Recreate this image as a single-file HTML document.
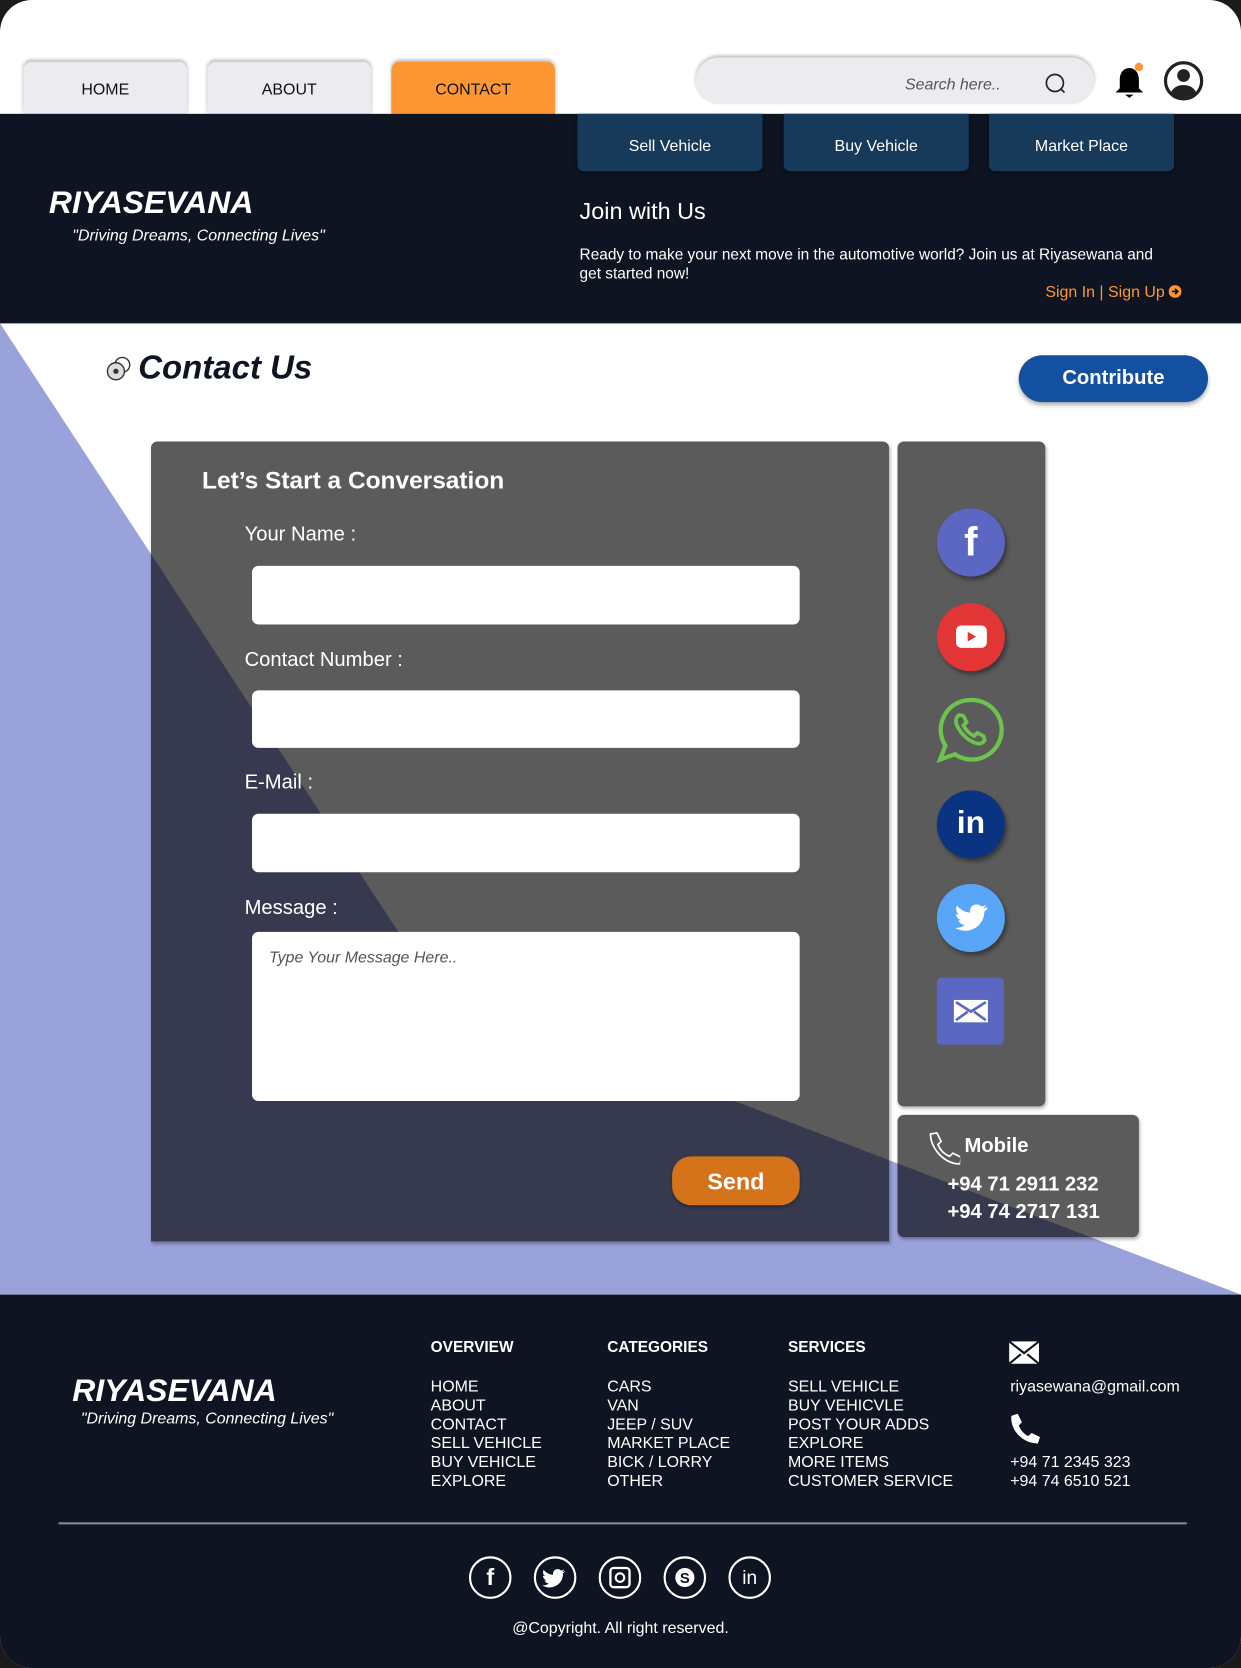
<!DOCTYPE html>
<html><head><meta charset="utf-8"><style>
*{margin:0;padding:0;box-sizing:border-box}
html,body{width:1241px;height:1668px;overflow:hidden;background:#1a1a1a}
body{font-family:"Liberation Sans",sans-serif}
#w{position:absolute;left:0;top:0;width:1167px;height:1568px;transform:scale(1.06341,1.06378);transform-origin:0 0;background:#fff;border-radius:30px;overflow:hidden}
.a{position:absolute}
.tab{position:absolute;top:58px;width:154px;height:49px;background:#ececf0;border-radius:8px 8px 0 0;box-shadow:0 -2px 3px rgba(0,0,0,.25);font-size:15px;text-align:center;line-height:54px;color:#111}
.nb{position:absolute;top:107px;width:174px;height:54px;background:#173a5b;border-radius:0 0 6px 6px;color:#fff;font-size:15px;text-align:center;line-height:62px;box-shadow:0 2px 4px rgba(0,0,0,.4)}
.lab{position:absolute;left:230px;color:#fff;font-size:19px}
.inp{position:absolute;left:237px;width:515px;background:#fff;border-radius:6px}
.fh{position:absolute;top:1259px;color:#fff;font-weight:bold;font-size:14.5px}
.fl{position:absolute;top:1295px;color:#fff;font-size:15px;line-height:17.8px}
.sc{position:absolute;width:64px;height:64px;border-radius:50%;left:881px;box-shadow:2px 3px 4px rgba(0,0,0,.4)}
.fc{position:absolute;top:1463px;width:40px;height:40px;border:2px solid #fff;border-radius:50%}
</style></head><body><div id="w">
<div class="tab" style="left:22px">HOME</div>
<div class="tab" style="left:195px">ABOUT</div>
<div class="tab" style="left:368px;background:#fd9734">CONTACT</div>
<div class="a" style="left:654px;top:54px;width:375px;height:44px;background:#ececf0;border-radius:22px;box-shadow:0 -2px 3px rgba(0,0,0,.25)"></div>
<div class="a" style="left:851px;top:71px;font-size:15px;font-style:italic;color:#555">Search here..</div>
<svg class="a" style="left:982px;top:68px" width="24" height="24"><circle cx="10" cy="10" r="8" fill="none" stroke="#222" stroke-width="1.6"/><line x1="16" y1="16" x2="19" y2="19" stroke="#222" stroke-width="1.6"/></svg>
<svg class="a" style="left:1045px;top:58px" width="34" height="38"><path d="M17 6c-6 0-9 5-9 11v8l-4 4h26l-4-4v-8c0-6-3-11-9-11z" fill="#000"/><path d="M13 31h8l-4 3z" fill="#000"/><circle cx="26" cy="5" r="4" fill="#fd9734"/></svg>
<svg class="a" style="left:1093px;top:56px" width="40" height="40"><circle cx="20" cy="20" r="17" fill="#fff" stroke="#222" stroke-width="3"/><circle cx="20" cy="15" r="6" fill="#222"/><path d="M8 31c3-6 8-7 12-7s9 1 12 7c-3 3-7 5-12 5s-9-2-12-5z" fill="#222"/></svg>
<div class="a" style="left:0;top:107px;width:1167px;height:197px;background:#0e1421"></div>
<div class="nb" style="left:543px">Sell Vehicle</div>
<div class="nb" style="left:737px">Buy Vehicle</div>
<div class="nb" style="left:930px">Market Place</div>
<div class="a" style="left:46px;top:174px;color:#fff;font-size:30px;font-weight:bold;font-style:italic">RIYASEVANA</div>
<div class="a" style="left:68px;top:213px;color:#fff;font-size:15px;font-style:italic">"Driving Dreams, Connecting Lives"</div>
<div class="a" style="left:545px;top:186px;color:#fff;font-size:22px">Join with Us</div>
<div class="a" style="left:545px;top:231px;color:#fff;font-size:14.5px;line-height:18px;width:560px">Ready to make your next move in the automotive world? Join us at Riyasewana and get started now!</div>
<div class="a" style="left:983px;top:266px;color:#fd9734;font-size:15px;white-space:nowrap">Sign In <span>|</span> Sign Up <svg width="12" height="12" style="vertical-align:-1px"><circle cx="6" cy="6" r="6" fill="#fd9734"/><path d="M3 6h5M6 3.5L8.5 6 6 8.5" stroke="#0e1421" stroke-width="1.6" fill="none"/></svg></div>
<svg class="a" style="left:0;top:304px" width="1167" height="913"><polygon points="0,0 408,623 1167,913 0,913" fill="#9aa2db"/></svg>
<svg class="a" style="left:98px;top:333px" width="28" height="28"><circle cx="17" cy="10" r="7" fill="#fff" stroke="#333" stroke-width="1.3"/><circle cx="11" cy="16" r="8" fill="#ddd" stroke="#333" stroke-width="1.3"/><circle cx="11" cy="16" r="2.5" fill="#333"/></svg>
<div class="a" style="left:130px;top:328px;font-size:31px;font-weight:bold;font-style:italic;color:#0e1421">Contact Us</div>
<div class="a" style="left:958px;top:334px;width:178px;height:44px;background:#1450a0;border-radius:22px;color:#fff;font-size:19px;font-weight:bold;text-align:center;line-height:44px;box-shadow:0 3px 4px rgba(0,0,0,.3)">Contribute</div>
<div class="a" style="left:142px;top:415px;width:694px;height:752px;background:rgba(0,0,0,.645);border-radius:6px 6px 0 0;box-shadow:1px 2px 3px rgba(0,0,0,.3)"></div>
<div class="a" style="left:190px;top:438px;color:#fff;font-size:23px;font-weight:bold">Let’s Start a Conversation</div>
<div class="lab" style="top:492px">Your Name :</div>
<div class="inp" style="top:532px;height:55px"></div>
<div class="lab" style="top:610px">Contact Number :</div>
<div class="inp" style="top:649px;height:54px"></div>
<div class="lab" style="top:725px">E-Mail :</div>
<div class="inp" style="top:765px;height:55px"></div>
<div class="lab" style="top:843px">Message :</div>
<div class="inp" style="top:876px;height:159px"><div style="margin:16px 0 0 16px;font-size:15px;font-style:italic;color:#555">Type Your Message Here..</div></div>
<div class="a" style="left:632px;top:1087px;width:120px;height:46px;background:#d4731a;border-radius:18px;color:#fff;font-size:22px;font-weight:bold;text-align:center;line-height:48px;box-shadow:0 2px 3px rgba(0,0,0,.3)">Send</div>
<div class="a" style="left:844px;top:415px;width:139px;height:625px;background:rgba(0,0,0,.645);border-radius:6px;box-shadow:1px 2px 3px rgba(0,0,0,.3)"></div>
<div class="sc" style="top:478px;background:#5b67c2;color:#fff;font-size:38px;font-weight:bold;text-align:center;line-height:64px">f</div>
<div class="sc" style="top:567px;background:#e23535"><svg width="64" height="64"><rect x="18" y="21" width="29" height="21" rx="5" fill="#fff"/><path d="M29 27l8 4.5-8 4.5z" fill="#e23535"/></svg></div>
<svg class="a" style="left:880px;top:654px" width="66" height="68"><path d="M33 4a28 28 0 1 1-15 51l-14 5 5-13A28 28 0 0 1 33 4z" fill="none" stroke="#6cc34e" stroke-width="4"/><path d="M22 18c-3 2-4 6-2 10 3 7 9 13 16 16 4 2 8 1 10-2l-1-4-6-3-3 3c-4-2-8-6-10-10l3-3-3-6z" fill="none" stroke="#6cc34e" stroke-width="3.5"/></svg>
<div class="sc" style="top:743px;background:#0a3482;color:#fff;font-size:30px;font-weight:bold;text-align:center;line-height:62px">in</div>
<div class="sc" style="top:831px;background:#59a6f9"><svg width="64" height="64"><path d="M47 22c-1 .6-2.4 1-3.6 1.1 1.3-.8 2.2-2 2.7-3.4-1.2.7-2.6 1.3-4 1.5a6.3 6.3 0 0 0-10.8 5.7C26.6 26.6 22 24.1 19 20.3c-1.7 2.9-.8 6.5 1.9 8.3-1 0-2-.3-2.8-.8 0 3 2.1 5.6 5 6.2-.9.3-1.9.3-2.8.1.8 2.5 3.2 4.3 5.9 4.4A12.7 12.7 0 0 1 17 41.1 18 18 0 0 0 44.700 25.900c1.200-.9 2.300-2 3.100-3.300z" fill="#fff"/></svg></div>
<div class="a" style="left:881px;top:919px;width:63px;height:63px;background:#5b67c2;border-radius:4px"><svg width="63" height="63"><rect x="16" y="21" width="32" height="21" fill="#fff"/><path d="M18 23l14 9 14-9M18 40l11-8M46 40l-11-8" stroke="#5b67c2" stroke-width="2.5" fill="none"/></svg></div>
<div class="a" style="left:844px;top:1048px;width:227px;height:115px;background:rgba(0,0,0,.645);border-radius:6px;box-shadow:1px 2px 3px rgba(0,0,0,.3)"></div>
<svg class="a" style="left:869px;top:1062px" width="34" height="34"><path d="M6 4l6-1 4 8-3 3c2 5 6 9 11 11l3-3 8 4-1 6c-14 1-28-14-28-28z" fill="none" stroke="#fff" stroke-width="1.6"/></svg>
<div class="a" style="left:907px;top:1067px;color:#fff;font-size:19px;font-weight:bold">Mobile</div>
<div class="a" style="left:891px;top:1101px;color:#fff;font-size:19px;line-height:26px;font-weight:bold">+94 71 2911 232<br>+94 74 2717 131</div>
<div class="a" style="left:0;top:1217px;width:1167px;height:351px;background:#0e1421"></div>
<div class="a" style="left:68px;top:1291px;color:#fff;font-size:30px;font-weight:bold;font-style:italic">RIYASEVANA</div>
<div class="a" style="left:76px;top:1325px;color:#fff;font-size:15px;font-style:italic">"Driving Dreams, Connecting Lives"</div>
<div class="fh" style="left:405px">OVERVIEW</div>
<div class="fh" style="left:571px">CATEGORIES</div>
<div class="fh" style="left:741px">SERVICES</div>
<div class="fl" style="left:405px">HOME<br>ABOUT<br>CONTACT<br>SELL VEHICLE<br>BUY VEHICLE<br>EXPLORE</div>
<div class="fl" style="left:571px">CARS<br>VAN<br>JEEP / SUV<br>MARKET PLACE<br>BICK / LORRY<br>OTHER</div>
<div class="fl" style="left:741px">SELL VEHICLE<br>BUY VEHICVLE<br>POST YOUR ADDS<br>EXPLORE<br>MORE ITEMS<br>CUSTOMER SERVICE</div>
<svg class="a" style="left:948px;top:1260px" width="30" height="23"><rect x="1" y="1" width="28" height="21" fill="#fff"/><path d="M1 1l14 11 14-11M1 22l11-9M29 22l-11-9" stroke="#0e1421" stroke-width="2" fill="none"/></svg>
<div class="a" style="left:950px;top:1295px;color:#fff;font-size:15px">riyasewana@gmail.com</div>
<svg class="a" style="left:948px;top:1328px" width="30" height="30"><path d="M3 3l6-2 4 8-3 3c2 5 5 8 9 10l3-3 8 4-2 6C14 29 2 17 3 3z" fill="#fff"/></svg>
<div class="fl" style="left:950px;top:1366px">+94 71 2345 323<br>+94 74 6510 521</div>
<div class="a" style="left:55px;top:1431px;width:1061px;height:2px;background:#858890"></div>
<div class="fc" style="left:441px;color:#fff;font-size:22px;text-align:center;line-height:36px;font-weight:bold">f</div>
<div class="fc" style="left:502px"><svg width="36" height="36"><path d="M27 12c-.8.4-1.6.6-2.5.7.9-.5 1.6-1.4 1.900-2.400-.9.5-1.800.900-2.800 1.100a4.400 4.400 0 0 0-7.500 4C12.600 15.200 9.400 13.500 7.300 10.800c-1.200 2-.6 4.600 1.300 5.800-.7 0-1.400-.2-2-.5 0 2.100 1.500 3.900 3.500 4.300-.6.200-1.300.2-2 .1.6 1.800 2.200 3 4.100 3A8.900 8.900 0 0 1 6 25.300 12.600 12.600 0 0 0 25.400 14.100c.8-.6 1.600-1.400 2.100-2.300z" fill="#fff"/></svg></div>
<div class="fc" style="left:563px"><svg width="36" height="36"><rect x="9" y="9" width="18" height="18" rx="3" fill="none" stroke="#fff" stroke-width="2.2"/><circle cx="18" cy="18" r="4" fill="none" stroke="#fff" stroke-width="2"/></svg></div>
<div class="fc" style="left:624px"><svg width="36" height="36"><circle cx="18" cy="18" r="9" fill="#fff"/><text x="18" y="23" font-size="14" font-weight="bold" text-anchor="middle" fill="#0e1421" font-family="Liberation Sans">S</text></svg></div>
<div class="fc" style="left:685px;color:#fff;font-size:18px;text-align:center;line-height:36px">in</div>
<div class="a" style="left:0;width:1167px;top:1522px;color:#fff;font-size:15px;text-align:center">@Copyright. All right reserved.</div>
</div></body></html>
